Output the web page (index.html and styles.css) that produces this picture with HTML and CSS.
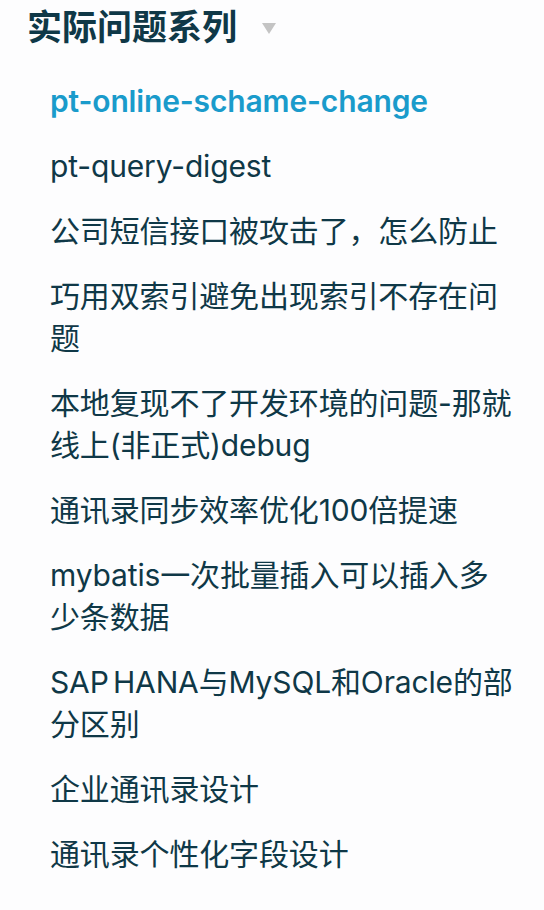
FILE: index.html
```html
<!DOCTYPE html>
<html lang="zh-CN">
<head>
<meta charset="utf-8">
<title>实际问题系列</title>
<link rel="stylesheet" href="styles.css">
</head>
<body>
<aside class="sidebar">
  <p class="heading"><span>实际问题系列</span><span class="arrow"></span></p>
  <ul class="links">
    <li><a class="link active" href="#">pt-online-schame-change</a></li>
    <li><a class="link" href="#">pt-query-digest</a></li>
    <li><a class="link" href="#">公司短信接口被攻击了，怎么防止</a></li>
    <li><a class="link" href="#">巧用双索引避免出现索引不存在问题</a></li>
    <li><a class="link" href="#">本地复现不了开发环境的问题-那就线上(非正式)debug</a></li>
    <li><a class="link" href="#">通讯录同步效率优化100倍提速</a></li>
    <li><a class="link" href="#">mybatis一次批量插入可以插入多少条数据</a></li>
    <li><a class="link" href="#">SAP HANA与MySQL和Oracle的部分区别</a></li>
    <li><a class="link" href="#">企业通讯录设计</a></li>
    <li><a class="link" href="#">通讯录个性化字段设计</a></li>
  </ul>
</aside>
</body>
</html>
```
FILE: styles.css
```css
html, body {
  margin: 0;
  padding: 0;
  background: #fdfdfe;
}
body {
  font-family: Inter, "Noto Sans CJK SC", sans-serif;
  color: #0f3847;
}
.sidebar {
  width: 544px;
  padding-top: 6px;
}
.heading {
  margin: 0;
  padding-left: 27px;
  font-size: 35px;
  line-height: 42px;
  font-weight: bold;
  display: flex;
  align-items: center;
}
.arrow {
  display: inline-block;
  width: 0;
  height: 0;
  margin-left: 25px;
  margin-top: 2px;
  border-left: 7.5px solid transparent;
  border-right: 7.5px solid transparent;
  border-top: 11px solid #c4c4c4;
}
.links {
  list-style: none;
  margin: 20px 0 0;
  padding: 0;
}
.link {
  display: block;
  padding: 11.5px 28px 11.5px 50px;
  font-size: 30px;
  line-height: 42px;
  letter-spacing: -0.15px;
  word-spacing: -4px;
  color: #0f3847;
  text-decoration: none;
}
.link.active {
  color: #1a9bcb;
  font-weight: 600;
}
```
